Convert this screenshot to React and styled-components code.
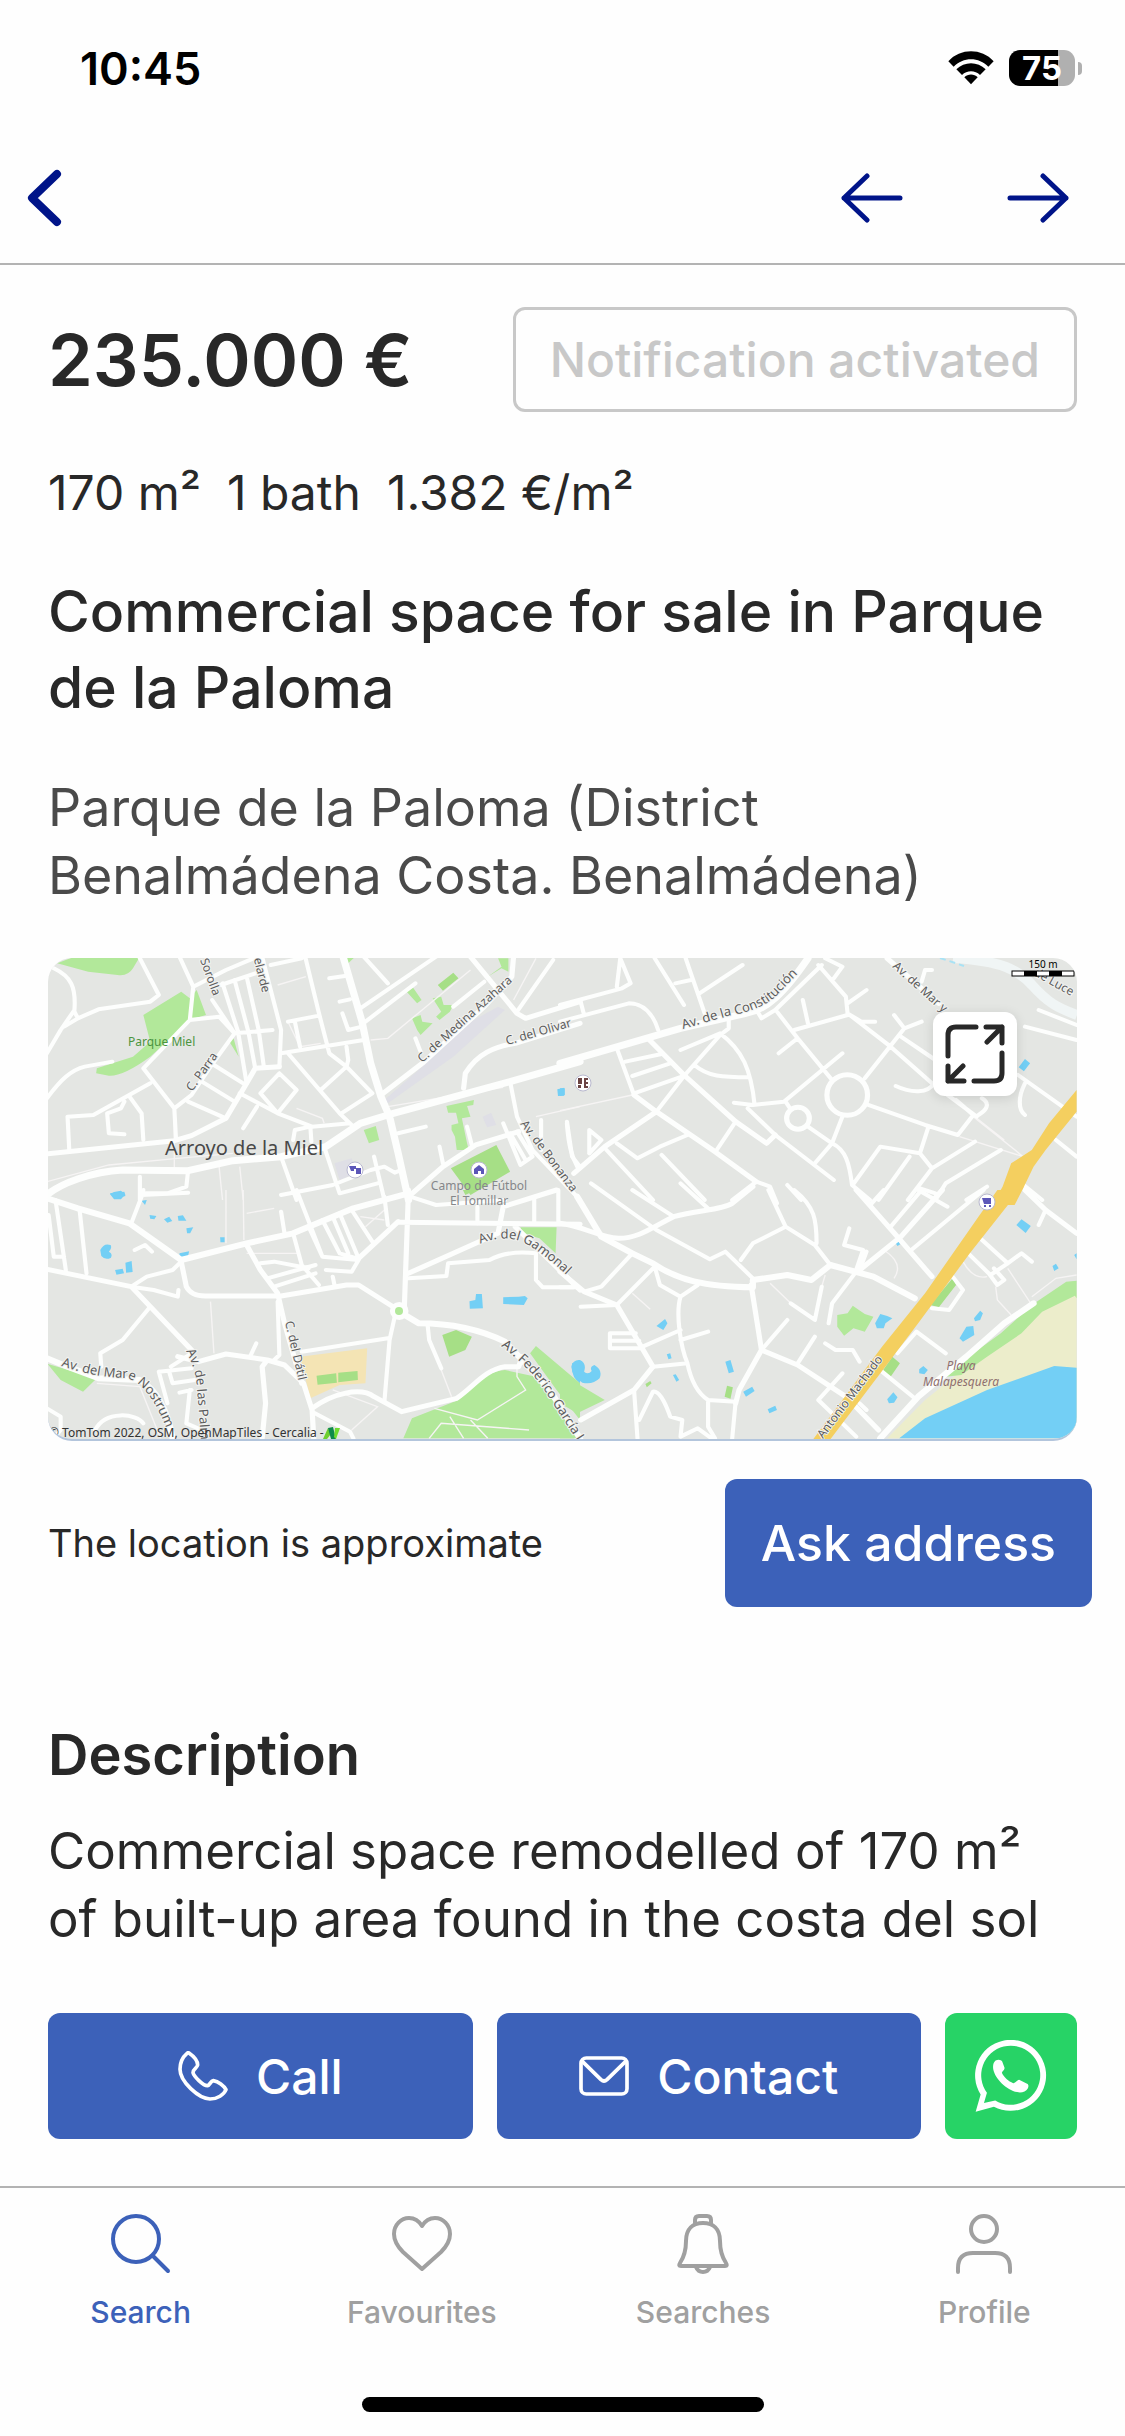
import styled, { createGlobalStyle } from 'styled-components';

const GlobalStyle = createGlobalStyle`
  * {
    box-sizing: border-box;
  }

  body {
    margin: 0;
    background: #fefefe;
    color: #282828;
    font-family: Inter, 'Liberation Sans', sans-serif;
  }

  button {
    font-family: inherit;
    cursor: pointer;
  }
`;

const Screen = styled.div`
  display: flex;
  flex-direction: column;
  min-height: 100vh;
`;

const StatusBar = styled.div`
  display: flex;
  align-items: center;
  justify-content: space-between;
  height: 132px;
  padding: 4px 43px 0 80px;
  color: #000;
`;

const Clock = styled.span`
  font-size: 45px;
  font-weight: 600;
`;

const StatusIcons = styled.div`
  display: flex;
  align-items: center;
  gap: 15px;
`;

const Battery = styled.div`
  display: flex;
  align-items: center;
  gap: 3px;

  &::after {
    content: '';
    width: 4px;
    height: 13px;
    border-radius: 0 6px 6px 0;
    background: #b0b0b0;
  }
`;

const BatteryLevel = styled.span`
  width: 66px;
  height: 36px;
  border-radius: 11px;
  background: linear-gradient(to right, #000 ${props => props.$level}%, #b0b0b0 ${props => props.$level}%);
  color: #fff;
  font-size: 33px;
  font-weight: 700;
  line-height: 36px;
  text-align: center;
`;

const NavBar = styled.header`
  display: flex;
  align-items: center;
  justify-content: space-between;
  height: 133px;
  padding: 0 56px 0 26px;
  border-bottom: 2px solid #b3b3b3;
`;

const NavGroup = styled.div`
  display: flex;
  gap: 102px;
`;

const NavButton = styled.button`
  display: flex;
  padding: 0;
  border: 0;
  background: none;
  color: #001489;
`;

const Main = styled.main`
  display: flex;
  flex: 1;
  flex-direction: column;
  gap: 48px;
  padding: 42px 48px 60px;
`;

const PriceRow = styled.div`
  display: flex;
  align-items: center;
  justify-content: space-between;
`;

const Price = styled.span`
  font-size: 72px;
  font-weight: 600;
  line-height: 84px;
`;

const NotificationButton = styled.button`
  height: 105px;
  padding: 0 34px;
  border: 3px solid #c8c8c8;
  border-radius: 12px;
  background: none;
  color: #c8c8c8;
  font-size: 48px;
  font-weight: 500;
`;

const Specs = styled.div`
  display: flex;
  gap: 26px;
  font-size: 48px;
  line-height: 66px;
`;

const Title = styled.h1`
  margin: 0;
  font-size: 57px;
  font-weight: 500;
  line-height: 76px;
`;

const Address = styled.p`
  margin: 0;
  color: #4a4a4a;
  font-size: 52px;
  line-height: 68px;
`;

const Location = styled.section`
  display: flex;
  flex-direction: column;
  gap: 38px;
`;

const MapFrame = styled.div`
  position: relative;
  height: 483px;
  overflow: hidden;
  border-bottom: 2px solid #b3c5dc;
  border-radius: 24px;
  background: #e4e6e3;
`;

const MapCanvas = styled.svg`
  display: block;
  width: 100%;
  height: 100%;
  font-family: 'Noto Sans', 'Open Sans', sans-serif;
`;

const ExpandButton = styled.button`
  position: absolute;
  top: 54px;
  right: 60px;
  display: flex;
  align-items: center;
  justify-content: center;
  width: 84px;
  height: 84px;
  padding: 0;
  border: 0;
  border-radius: 12px;
  background: #fff;
  box-shadow: 0 2px 12px rgba(0, 0, 0, 0.12);
  color: #282828;
`;

const LocationRow = styled.div`
  display: flex;
  align-items: center;
  justify-content: space-between;
  margin-right: -15px;
`;

const LocationNote = styled.span`
  font-size: 38px;
`;

const AskButton = styled.button`
  height: 128px;
  padding: 0 36px;
  border: 0;
  border-radius: 12px;
  background: #3c61b9;
  color: #fff;
  font-size: 50px;
  font-weight: 500;
`;

const Description = styled.section`
  display: flex;
  flex-direction: column;
  gap: 24px;
  padding-top: 62px;
`;

const SectionTitle = styled.h2`
  margin: 0;
  font-size: 56px;
  font-weight: 600;
  line-height: 76px;
`;

const BodyText = styled.p`
  margin: 0;
  font-size: 51px;
  line-height: 68px;
`;

const ActionBar = styled.div`
  display: grid;
  grid-template-columns: 1fr 1fr 132px;
  gap: 24px;
  padding: 0 48px 47px;
`;

const ActionButton = styled.button`
  display: flex;
  align-items: center;
  justify-content: center;
  gap: 28px;
  height: 126px;
  padding: 0;
  border: 0;
  border-radius: 12px;
  background: ${props => props.$color || '#3c61b9'};
  color: #fff;
  font-size: 48px;
  font-weight: 500;
`;

const TabBar = styled.nav`
  display: grid;
  grid-template-columns: repeat(4, 1fr);
  border-top: 2px solid #b3b3b3;
`;

const Tab = styled.a`
  display: flex;
  flex-direction: column;
  align-items: center;
  gap: 20px;
  padding-top: 26px;
  color: ${props => (props.$active ? '#3c61b9' : '#a0a0a0')};
  font-size: 30px;
  font-weight: 500;
  line-height: 36px;
  text-decoration: none;
`;

const HomeIndicator = styled.div`
  width: 402px;
  height: 15px;
  margin: 67px auto 25px;
  border-radius: 8px;
  background: #000;
`;

const line = {
  fill: 'none',
  stroke: 'currentColor',
  strokeLinecap: 'round',
  strokeLinejoin: 'round',
};

const WifiIcon = () => (
  <svg width="46" height="34" viewBox="0 0 138 102" aria-hidden="true">
    <path d="M1 31C37-9 101-9 137 31L121 47C93 17 45 17 17 47Z" />
    <path d="M25 55C49 31 89 31 113 55L96 72C81 57 57 57 42 72Z" />
    <path d="M49 79C60 68 78 68 89 79L69 100Z" />
  </svg>
);

const BackIcon = () => (
  <svg width="38" height="60" viewBox="0 0 38 60" strokeWidth="8" {...line}>
    <path d="M31 6L6 30L31 54" />
  </svg>
);

const ArrowLeftIcon = () => (
  <svg width="63" height="50" viewBox="0 0 63 50" strokeWidth="5" {...line}>
    <path d="M59 25H3M26 3L3 25L26 47" />
  </svg>
);

const ArrowRightIcon = () => (
  <svg width="63" height="50" viewBox="0 0 63 50" strokeWidth="5" {...line}>
    <path d="M4 25H60M37 3L60 25L37 47" />
  </svg>
);

const ExpandIcon = () => (
  <svg width="60" height="60" viewBox="-1 -1 60 60" strokeWidth="5" {...line}>
    <path d="M2 31V10Q2 2 10 2H30M56 28V48Q56 56 48 56H28" />
    <path d="M40 2H56V18M56 2L41 17M2 41V56H18M2 56L17 41" />
  </svg>
);

const PhoneIcon = () => (
  <svg width="50" height="50" viewBox="0 0 150 150" strokeWidth="11" {...line}>
    <path d="M33 6C43 13 59 27 59 42C57 52 45 53 45 65C48 77 75 104 88 104C97 102 97 90 106 89C121 91 138 104 144 116C138 131 118 144 96 144C62 143 6 92 6 55C6 36 13 19 27 7Q30 4 33 6Z" />
  </svg>
);

const MailIcon = () => (
  <svg width="50" height="40" viewBox="0 0 150 120" strokeWidth="11" {...line}>
    <rect x="6" y="6" width="138" height="108" rx="16" />
    <path d="M10 16L66 71Q75 79 84 71L140 16" />
  </svg>
);

const WhatsAppIcon = () => (
  <svg width="72" height="72" viewBox="136 119 215 217" fill="currentColor">
    <path
      fillRule="evenodd"
      d="M137 335L152 283A107 107 0 1 1 192 320ZM162 309L196 301A89 89 0 1 0 171 278Z"
    />
    <path d="M197 181C205 176 214 178 217 184L224 203C225 209 216 213 216 218C222 232 236 244 250 249C256 250 262 240 268 239L292 251C297 253 297 260 294 265C288 275 275 279 262 276C230 270 195 235 190 207C188 195 191 186 197 181Z" />
  </svg>
);

const SearchIcon = () => (
  <svg width="60" height="60" viewBox="0 0 60 60" strokeWidth="4" {...line}>
    <circle cx="25" cy="25" r="23" />
    <path d="M42 42L57 57" />
  </svg>
);

const HeartIcon = () => (
  <svg width="60" height="60" viewBox="0 0 60 60" strokeWidth="4" {...line}>
    <path d="M30 55L11 38C5 32 2 27 2 20C2 11 9 4 17 4C23 4 27 7 30 12C33 7 37 4 43 4C51 4 58 11 58 20C58 27 55 32 49 38Z" />
  </svg>
);

const BellIcon = () => (
  <svg width="60" height="60" viewBox="0 0 60 60" strokeWidth="4" {...line}>
    <path d="M7 49C11 43 13 36 13 27C13 15 20 9 30 9C40 9 47 15 47 27C47 36 49 43 53 49Q55 52 52 52H8Q5 52 7 49Z" />
    <path d="M22 10V6Q22 2 26 2H34Q38 2 38 6V10M23 53Q25 58 30 58Q35 58 37 53" />
  </svg>
);

const ProfileIcon = () => (
  <svg width="60" height="60" viewBox="0 0 60 60" strokeWidth="4" {...line}>
    <circle cx="30" cy="15" r="13" />
    <path d="M4 58V54Q4 39 19 39H41Q56 39 56 54V58" />
  </svg>
);

// The map is drawn as four tiles, each in its own units.
const tiles = {
  nw: 'translate(-8 -8) scale(0.3444 0.3333)',
  ne: 'translate(512 -8) scale(0.3444 0.3333)',
  sw: 'translate(-8 232) scale(0.3444 0.3333)',
  se: 'translate(512 232) scale(0.3444 0.3333)',
};

const areas = [
  ['nw', '#b2e89a', 'M50 40L100 20H290L270 55Q255 80 225 75L140 65ZM300 195L410 125L435 145L455 120L482 195L440 208L320 320Q240 380 200 377L163 370L165 355L270 320L320 275ZM550 275L562 265L577 320ZM885 20H915L895 40ZM1060 120L1080 108L1108 150L1095 160ZM1140 145L1165 140L1172 165L1200 165L1190 185L1160 210L1150 200L1165 185ZM1080 205L1105 195L1110 215L1140 220L1105 255L1095 240ZM1300 80L1340 50L1330 25H1360V65L1340 55ZM1180 468L1260 450L1258 465L1240 468L1250 500L1225 505L1240 580L1245 600L1210 600L1205 560L1195 540V525L1215 520L1208 488H1185ZM940 540L975 528L985 570L955 580Z'],
  ['nw', '#a6df86', 'M1155 105L1200 68L1215 85L1170 122ZM1193 655L1325 585L1365 665L1250 735Z'],
  ['nw', '#dfdfe6', 'M1000 450L1110 350L1190 250L1330 170L1350 180L1200 320L1010 460ZM855 640L905 625L920 670L870 690ZM1285 500L1310 488L1325 525L1298 532Z'],
  ['nw', '#73cff5', 'M203 732L215 726L235 722L248 733L235 748H215ZM1502 418L1522 413L1522 437L1504 438Z'],
  ['ne', '#73cff5', 'M1332 352L1350 327L1365 340L1347 364ZM0 415L14 415V435L0 438Z'],
  ['sw', '#73cff5', 'M203 10L245 5L248 18L218 26ZM295 32L310 30L305 45ZM318 75L338 78L332 88L320 86ZM360 88L375 80L384 93L370 98ZM400 78L415 76L425 92L402 92ZM425 115L445 112L436 130H427ZM523 142H536V157H524ZM405 190L433 184L430 198L405 202ZM175 180Q185 158 205 165Q210 175 200 185Q212 190 206 203Q190 212 178 198ZM218 240L240 236L244 250L222 254ZM248 218L266 213L269 246L250 248ZM1247 334L1264 330L1266 312H1283L1286 355L1248 356ZM1345 322L1390 320L1408 318L1416 325L1405 345L1345 342ZM1545 520L1568 510V580Q1540 560 1545 520Z'],
  ['sw', '#b2e89a', 'M22 522L165 565L125 605L60 570ZM1395 112H1500L1497 190L1450 145L1400 130ZM1055 745L1080 685L1215 630C1260 590 1290 545 1350 540L1440 560L1480 610L1568 745ZM1423 490L1440 468L1568 580V690L1500 600Z'],
  ['sw', '#f4e4b4', 'M755 500L950 475L945 580L870 585L785 625Z'],
  ['sw', '#a6df86', 'M803 557L860 550L862 578L806 584ZM866 548L922 543L923 570L866 577ZM1168 435L1208 420L1254 440L1235 480L1188 500ZM1228 0H1265L1235 15Z'],
  ['se', '#b2e89a', 'M0 550L130 630L50 670L0 640ZM0 690L40 745H0ZM805 375L835 370L850 347L885 372L910 380L885 425L852 415L825 437L805 410Z'],
  ['se', '#a6df86', 'M1075 345L1140 265L1150 285L1100 352ZM935 545L965 500L987 520L960 560ZM478 620L485 587L502 592L495 626ZM248 582L262 573L266 580L252 592Z'],
  ['se', '#ecedcb', 'M1500 310L1390 360L1300 450L1180 530L1060 630L950 745H1500Z'],
  ['se', '#b2e89a', 'M1500 272L1470 275L1370 345L1280 430L1180 505L1120 560L1165 555L1240 500L1340 430L1400 365L1495 317L1500 325Z'],
  ['se', '#73cff5', 'M985 745L1060 685L1240 600L1435 528L1500 533V745ZM33 530Q38 508 58 510Q78 520 70 545Q82 555 92 543Q85 530 100 525Q125 540 115 565Q95 585 65 578Q35 560 33 530ZM280 408L305 387L312 400L300 420ZM480 515L495 510L505 545L490 550ZM532 605L558 590L565 603L540 620ZM603 658L625 647L630 660L608 670ZM310 493L320 490L324 505L315 508ZM328 555L336 553L346 570L338 575ZM915 400L930 372L950 378L965 385L945 400L940 415L920 415ZM970 153L980 151L988 163L980 168ZM1325 105L1340 88L1367 108L1352 129ZM1430 228L1440 221L1448 235L1435 243ZM1493 195L1500 190V208ZM1202 385L1220 362L1228 370L1220 390L1205 394ZM1160 445L1180 410L1200 408L1203 435L1170 455ZM1043 538L1055 528L1068 540L1058 553L1043 550ZM950 628L968 607L980 622L970 638L955 640Z'],
];

const tracks = [
  ['nw', 'M20 695L200 645L400 625L560 610M690 105L772 80M720 215L755 290L815 280M745 475L820 505L825 520M520 650L530 750M580 650L590 750M390 480V660M1010 470L1345 412M1440 25L1375 150M1568 470L1440 500M960 270L1010 265L1250 60'],
  ['ne', 'M0 482L210 435M1200 500L1345 620L1160 560M1210 505L1290 570'],
  ['sw', 'M495 335L505 490M540 0V160M590 0L592 150M600 190L755 190M600 70L680 55M930 80L1000 90M945 110L1000 60M1145 655L1270 690L1410 600L1385 560V530M1165 540L1195 620M1190 680L1230 745M1250 690L1300 745M1130 745L1165 700L1420 720M165 580L290 590L350 745M850 600L980 650L905 720'],
  ['se', 'M610 280L670 340M760 290L770 255M940 180Q1000 220 970 265M1170 215Q1200 270 1240 260M1265 290L1270 330L1310 375M1300 235L1370 345M1370 320L1440 265L1500 255M210 310L262 358'],
];

const roads = [
  ['nw', 4, 'M40 55C90 80 105 110 100 180L60 240L20 310M70 230L110 205L100 185M110 205L170 178L320 155L345 135L290 25M20 445C60 390 90 360 130 350L210 335M85 600L80 500L155 495L320 400M405 20L445 110L435 210L300 355L390 475L395 570M435 210L520 200L565 250L495 350L440 435L390 475M445 110L540 60L620 25M500 150L565 250L675 240M530 100L575 245L600 400M525 105L640 65M565 90L605 245L625 355M600 80L635 240L650 350M645 20L700 240L695 350M770 20L810 190L840 310L890 350L815 420M700 310L940 270M720 215L810 197M740 215L755 290M670 45L760 25M840 85L885 78M870 155L900 148M878 190L895 240L935 230M930 175L1150 20M945 215L1090 100M720 310L870 490L910 530M890 290L895 330L890 350L965 430L875 490M505 345L590 400M470 395L565 455M430 455L540 505M580 430L690 490L790 530L900 520M695 370L640 430L690 490L745 420L695 370M630 470L590 535M735 570L740 540L785 530L788 575M260 440L295 490L300 570M245 455L235 475L195 490L200 550L245 553M290 680V750M430 662L425 710L370 730L290 730M700 620L745 750M825 590L870 730L980 700M700 735L850 705L960 660L1000 650L1030 668L1050 660M970 620L1000 750M1040 550L1120 530M940 20L1010 100M1385 185L1490 30M1240 530L1255 590M1160 590L1170 640M1345 520L1395 645L1430 620L1385 545M1365 550L1410 630M1455 510V600M1530 515L1545 620L1568 650M1200 170L1290 95M1090 265L1105 305M1365 395L1385 500L1430 600L1568 750'],
  ['nw', 5, 'M15 612L390 572L440 557L540 505L600 400L625 355L695 350M990 435L1110 340L1290 170L1370 80L1375 20M1250 20L1385 190L1410 205L1568 155M1230 415L1235 370C1270 310 1320 290 1380 280L1568 220M1070 740L1170 650L1265 585L1390 545'],
  ['nw', 7, 'M20 735C60 700 150 665 240 660L430 662L560 632L700 620L830 590L930 520L1010 495L1365 395L1568 335M880 20L935 215L960 340L990 440L1015 500L1040 610L1070 750'],
  ['ne', 4, 'M0 165L180 115L205 100L175 25L165 110M0 215L200 160C240 160 270 190 285 240M70 195L60 155M275 25L360 165M365 25L420 190M335 100L380 90M405 130L530 45M760 45L625 180L585 205L565 170M750 45L830 140L835 190L960 290L1080 400L1210 500M770 25L820 50L795 85M835 160L890 120M705 150L720 220M680 240L835 195M835 190L875 215H915M635 310L690 265M630 185L690 265L790 390M820 310L650 455L560 465L505 458M165 295L215 435M190 335L295 312M210 378L320 340M215 430L360 378L465 255L490 235V200M350 300L465 250C530 300 555 360 565 465M390 345C430 380 470 382 550 382M280 485L360 378M510 515L455 600M545 475L625 555L795 690M885 385L1000 235L970 195M1000 235L1050 215M990 260L1090 330M895 465L1060 525L1155 555L1200 495L1150 450M655 455L668 475M720 530L790 580C830 600 840 640 848 705L900 750M820 500L790 580L740 640M975 408C1020 430 1070 430 1085 400M1070 530L1045 610L1080 655M850 705L930 590L1045 610M1015 620L925 750M1205 575L1080 655L1010 750M1280 600L1120 700L1090 750M1350 230L1500 270M1390 180L1500 225M1330 375L1500 500M1350 400C1330 440 1330 480 1350 495M1225 445C1250 460 1240 480 1215 495M1050 95L1060 60H1080M20 520C25 590 35 620 50 650M85 610V540L120 570L85 610M165 580L225 625L290 590L370 555M135 600L270 750M295 615L420 750M570 695L610 710L630 760M570 695L500 750M660 705L700 750M1180 750L1240 710M1440 570L1500 620M1340 700L1400 750M1045 715L1090 730'],
  ['ne', 5, 'M260 270L360 375L510 515L600 580L625 555M215 435L280 485L450 605L570 695M280 485L130 590L40 670M950 25L1100 160M775 435A58 60 0 1 1 893 435A58 60 0 1 1 775 435M658 505A33 33 0 1 1 724 505A33 33 0 1 1 658 505'],
  ['ne', 7, 'M0 340L350 235L540 190C600 180 650 130 720 25'],
  ['sw', 4, 'M300 0L295 20L265 100M295 15L430 8M115 60L135 250M45 30L75 240M25 75L40 200L70 200M410 215L385 240L310 260L265 290L330 300L400 320L402 300M320 350L240 450L175 490L178 530M275 180L305 165L325 185M690 335L695 495L680 510M610 500L628 460M345 545L440 535M345 545L370 640M375 545L385 580L450 570M440 490L380 530M435 600L425 700L470 720M405 608L440 600M20 655L60 680V720L40 745M160 720C190 660 280 670 300 700M745 0L820 200M735 130L760 225L810 285M780 110L820 200L925 210L905 245L830 240M820 90L870 190L920 205M850 80L895 190M870 70L925 205M905 60L965 155M1000 20L1010 105M700 65L710 130M660 265L800 225M640 220L680 215L780 235M680 290L800 250M850 260L855 285M1030 380L1015 450L1000 635M760 485L1010 445M1125 400L1130 450L1165 535M790 665L900 725L910 745M1070 265L1180 258L1185 220L1305 210C1350 185 1400 185 1440 190V270L1460 292H1550M1270 50V100M1435 20V95M1505 0V100M1075 20L1150 45L1350 30'],
  ['sw', 5, 'M20 238L265 290L440 480M410 215L425 290C435 310 450 318 480 318H700L890 285H925L1040 360M645 745L655 640L645 530L660 510L540 492L460 515L400 500M660 510L710 525L765 580L790 660L795 745M600 165L640 240L690 310L710 400L760 580M1045 97L1568 103M1070 0L1058 350M1040 95L925 205M1070 250L1330 130L1345 50L1500 0M1380 110L1568 300M790 655C850 610 930 590 970 620L1050 665L1210 625C1260 590 1290 540 1350 530H1390L1400 500'],
  ['sw', 6, 'M20 25L110 55L260 100L410 210L600 160L735 130L910 55L1070 10M20 505L80 530L170 565L290 570C340 600 370 660 385 745M1043 365L1100 400C1200 400 1280 420 1350 455L1400 510L1480 600L1568 745M1025 363A18 18 0 1 1 1061 363A18 18 0 1 1 1025 363'],
  ['se', 4, 'M210 0L330 80M350 -20L435 60M90 -20L280 120L435 208L480 185L560 265M210 190L120 290L70 305M0 292H50M60 350L165 345L275 230L290 285L350 320L400 285M350 320C335 370 350 470 370 520C380 570 400 610 430 630L510 635L500 745M430 630V710L450 745M220 430H145V475H240M150 452H230M240 470L350 420M350 450L430 425M270 530L370 520M215 600L225 745M230 690L270 605C290 600 310 650 320 680L355 690L350 740L400 715L440 745M585 480L660 390M690 520L740 440M525 210L560 160L655 110L740 165L785 225M605 0L655 110M680 0C740 50 745 90 745 160M670 340L740 390L760 290M860 245L790 340L780 400M840 115L825 165L880 180L860 240M890 185L870 240M905 40L940 0M960 110L1050 0M1040 0L1125 50M1020 180L1230 0M1080 355L1130 360L1170 300L1140 260M1220 145L1300 220L1250 255L1180 185M1245 250L1270 285L1290 270L1260 235M1300 220L1340 190L1370 215M1410 60L1390 105M980 490L1035 425L1120 490M935 545L1030 625M770 460L800 480H850L870 515M820 550L750 630L860 740M870 640L890 660'],
  ['se', 5, 'M0 100C70 110 110 140 170 145C230 145 270 110 330 80C400 60 470 60 500 40L560 -10M0 245L70 305L165 345L270 530L215 600L60 690M555 285L585 480L520 600L510 640M585 480L690 525L830 620L925 720M860 0L975 135L1080 260M870 240L990 140L1110 0M1350 0L1410 60L1500 130'],
  ['se', 6, 'M50 20L120 140L210 190L270 220C340 270 420 290 560 292V270L660 255L730 270L785 225L910 260L1030 325M1375 340L1290 400L1180 500L1040 620L930 745'],
];

const highways = [
  ['ne', 'M1500 420L1420 520L1370 600L1310 640L1285 710L1255 765H1320L1345 715L1375 650L1410 600L1500 485Z'],
  ['se', 'M1270 0H1335L1190 190L1040 400L785 748H735L935 470L1060 310L1215 80Z'],
];

const labels = [
  { text: 'Sorolla', x: 152, y: 2, angle: 70 },
  { text: 'Velarde', x: 204, y: -6, angle: 76 },
  { text: 'C. Parra', x: 144, y: 134, angle: -54 },
  { text: 'C. de Medina Azahara', x: 374, y: 105, angle: -42 },
  { text: 'C. del Olivar', x: 459, y: 87, angle: -16 },
  { text: 'Av. de Bonanza', x: 472, y: 166, angle: 53 },
  { text: 'Av. de Mar y', x: 844, y: 9, angle: 42 },
  { text: 'de Luce', x: 985, y: 17, angle: 29 },
  { text: 'C. del Dátil', x: 237, y: 364, angle: 77 },
  { text: 'Antonio Machado', x: 775, y: 481, angle: -53 },
];

const curvedLabels = [
  { id: 'constitucion', text: 'Av. de la Constitución', d: 'M635 71L680 58Q715 52 730 36L765 0' },
  { id: 'gamonal', text: 'Av. del Gamonal', d: 'M432 286Q460 274 482 288Q505 303 530 328' },
  { id: 'nostrum', text: 'Av. del Mare Nostrum', d: 'M13 408Q50 420 78 420Q102 426 120 475' },
  { id: 'palmeras', text: 'Av. de las Palm', d: 'M138 393Q148 412 149 430L156 520' },
  { id: 'federico', text: 'Av. Federico García L', d: 'M453 388Q485 412 500 438L560 530' },
];

const TownMap = () => (
  <MapCanvas viewBox="0 0 1029 481" preserveAspectRatio="xMidYMid slice" role="img" aria-label="Map">
    {areas.map(([tile, fill, d], i) => (
      <path key={i} transform={tiles[tile]} fill={fill} d={d} />
    ))}
    <path d="M905 0C955 3 970 12 984 27C1000 45 1010 50 1029 57" fill="none" stroke="#f0f5f5" strokeWidth="10" />
    <path d="M892 0L916 8" fill="none" stroke="#a9e2f4" strokeWidth="2" strokeDasharray="6 4" />
    {tracks.map(([tile, d], i) => (
      <path key={i} transform={tiles[tile]} fill="none" stroke="#f6f4f4" strokeWidth="4" d={d} />
    ))}
    {roads.map(([tile, width, d], i) => (
      <path
        key={i}
        transform={tiles[tile]}
        fill="none"
        stroke="#fdfefd"
        strokeWidth={width * 3}
        strokeLinecap="round"
        strokeLinejoin="round"
        d={d}
      />
    ))}
    <circle cx="351" cy="353" r="4" fill="#b2e89a" />
    {highways.map(([tile, d], i) => (
      <path key={i} transform={tiles[tile]} fill="#f4cf5f" d={d} />
    ))}

    <g fill="#fff" stroke="#b9b9cf">
      <circle cx="307" cy="212" r="8" />
      <circle cx="431" cy="212" r="8" />
      <circle cx="535" cy="125" r="8" />
      <circle cx="939" cy="244" r="8" />
    </g>
    <g fill="#5c57b8">
      <path d="M301 208H308V211H306V213H303ZM308 210H313V216H308Z" />
      <path d="M426 211L431 207L436 211V216H433V213H430V216H426Z" />
      <path d="M934 240H943V246H936ZM936 247H938V249H936ZM941 247H943V249H941Z" />
    </g>
    <path d="M530 120H534V126H530ZM530 127H533V130H530ZM536 120H540V122H538V124H540V126H538V128H540V130H536Z" fill="#6b4444" />

    <g fill="#5c5c5c" fontSize="12" stroke="#f2f3f1" strokeWidth="2" paintOrder="stroke">
      {labels.map(label => (
        <text key={label.text} transform={`translate(${label.x} ${label.y}) rotate(${label.angle})`}>
          {label.text}
        </text>
      ))}
      {curvedLabels.map(label => (
        <g key={label.id}>
          <path id={label.id} d={label.d} fill="none" stroke="none" />
          <text fontSize="13">
            <textPath href={`#${label.id}`}>{label.text}</textPath>
          </text>
        </g>
      ))}
    </g>
    <text x="117" y="197" fontSize="20" fill="#484848">Arroyo de la Miel</text>
    <text x="80" y="88" fontSize="12" fill="#4b9440">Parque Miel</text>
    <g textAnchor="middle" fontSize="12" fill="#85878a">
      <text x="431" y="232">Campo de Fútbol</text>
      <text x="431" y="247">El Tomillar</text>
    </g>
    <g textAnchor="middle" fontSize="12" fontStyle="italic" fill="#8f6f6f">
      <text x="913" y="412">Playa</text>
      <text x="913" y="428">Malapesquera</text>
    </g>
    <text x="1" y="479" fontSize="12" fill="#333">© TomTom 2022, OSM, OpenMapTiles - Cercalia -</text>
    <g transform="translate(4 0)">
      <path d="M271 481L276 470L279 476L275 481Z" fill="#6fcf2f" />
      <path d="M276 470L281 469L284 481H279Z" fill="#0e8a4b" />
      <path d="M282 479L283 470H288L284 481Z" fill="#6fdc2f" />
    </g>
    <text x="995" y="10" textAnchor="middle" fontSize="10" fill="#000">150 m</text>
    <rect x="964" y="13" width="62" height="5" fill="#fff" stroke="#000" />
    <path d="M976 13H989V18H976ZM1001 13H1014V18H1001Z" />
  </MapCanvas>
);

const specs = ['170 m²', '1 bath', '1.382 €/m²'];

const tabs = [
  { label: 'Search', icon: SearchIcon, active: true },
  { label: 'Favourites', icon: HeartIcon },
  { label: 'Searches', icon: BellIcon },
  { label: 'Profile', icon: ProfileIcon },
];

const App = () => {
  return (
    <Screen>
      <GlobalStyle />
      <StatusBar>
        <Clock>10:45</Clock>
        <StatusIcons>
          <WifiIcon />
          <Battery>
            <BatteryLevel $level={75}>75</BatteryLevel>
          </Battery>
        </StatusIcons>
      </StatusBar>

      <NavBar>
        <NavButton aria-label="Back"><BackIcon /></NavButton>
        <NavGroup>
          <NavButton aria-label="Previous"><ArrowLeftIcon /></NavButton>
          <NavButton aria-label="Next"><ArrowRightIcon /></NavButton>
        </NavGroup>
      </NavBar>

      <Main>
        <PriceRow>
          <Price>235.000 €</Price>
          <NotificationButton>Notification activated</NotificationButton>
        </PriceRow>
        <Specs>
          {specs.map(spec => <span key={spec}>{spec}</span>)}
        </Specs>
        <Title>Commercial space for sale in Parque de la Paloma</Title>
        <Address>
          Parque de la Paloma (District<br />
          Benalmádena Costa. Benalmádena)
        </Address>

        <Location>
          <MapFrame>
            <TownMap />
            <ExpandButton aria-label="Expand map"><ExpandIcon /></ExpandButton>
          </MapFrame>
          <LocationRow>
            <LocationNote>The location is approximate</LocationNote>
            <AskButton>Ask address</AskButton>
          </LocationRow>
        </Location>

        <Description>
          <SectionTitle>Description</SectionTitle>
          <BodyText>
            Commercial space remodelled of 170 m²<br />
            of built-up area found in the costa del sol
          </BodyText>
        </Description>
      </Main>

      <ActionBar>
        <ActionButton><PhoneIcon />Call</ActionButton>
        <ActionButton><MailIcon />Contact</ActionButton>
        <ActionButton $color="#27d366" aria-label="WhatsApp"><WhatsAppIcon /></ActionButton>
      </ActionBar>

      <TabBar>
        {tabs.map(({ label, icon: Icon, active }) => (
          <Tab key={label} href="#" $active={active}>
            <Icon />
            {label}
          </Tab>
        ))}
      </TabBar>
      <HomeIndicator />
    </Screen>
  );
};

export default App;
